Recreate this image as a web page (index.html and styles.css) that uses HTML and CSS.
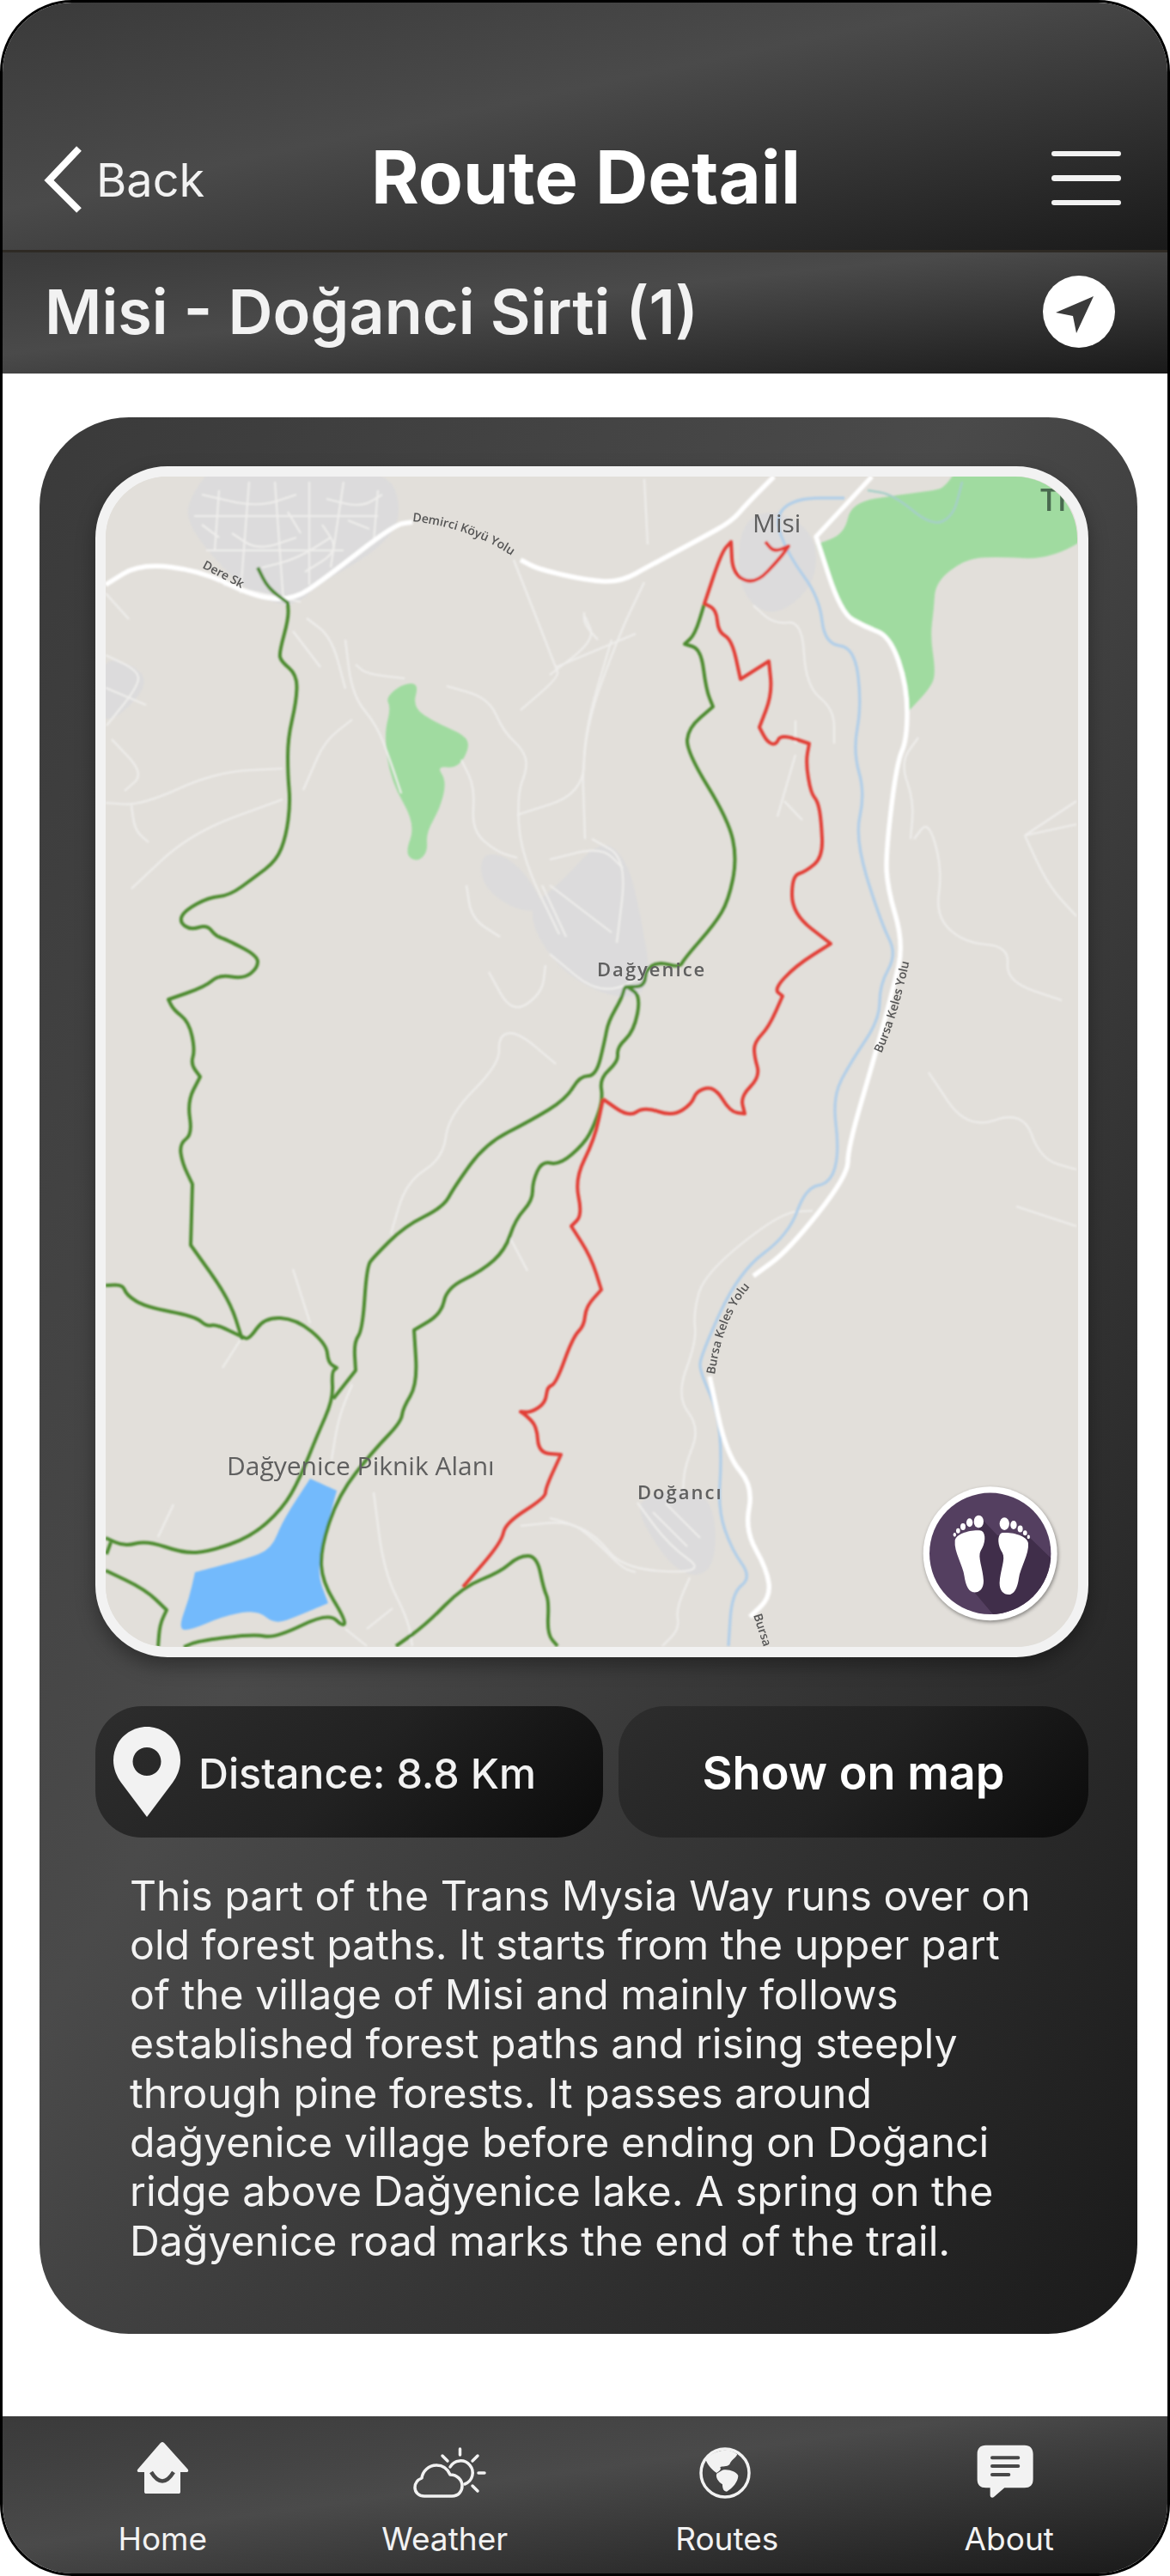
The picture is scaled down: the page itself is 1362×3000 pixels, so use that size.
FILE: index.html
```html
<!DOCTYPE html>
<html lang="en">
<head>
<meta charset="utf-8">
<title>Route Detail</title>
<link rel="stylesheet" href="styles.css">
</head>
<body>
<div class="phone">
  <header class="topbar">
    <a class="back">
      <svg class="back-icon" viewBox="0 0 50 80"><path d="M42 4 L7 41 L42 76"/></svg>
      <span>Back</span>
    </a>
    <h1 class="title">Route Detail</h1>
    <div class="menu"><i></i><i></i><i></i></div>
  </header>
  <div class="subbar">
    <h2 class="route-name">Misi - Doğanci Sirti (1)</h2>
    <svg class="locate" viewBox="0 0 84 84"><circle cx="42" cy="42" r="42" class="white"/><path class="dark" d="M59 24 L15 43 L35 47 L39 67 Z"/></svg>
  </div>
  <main class="content">
    <section class="card">
      <div class="map-frame">
        <svg class="map" viewBox="123 554 1131 1363">
          <defs>
            <filter id="soft" x="-2%" y="-2%" width="104%" height="104%"><feGaussianBlur stdDeviation="1"/></filter>
            <filter id="softer" x="-2%" y="-2%" width="104%" height="104%"><feGaussianBlur stdDeviation="0.5"/></filter>
            <path id="lbl1" d="M480 606 C520 610 570 625 606 654"/>
            <path id="lbl2" d="M235 660 L288 688"/>
            <path id="lbl3" d="M1026 1226 C1042 1190 1052 1150 1062 1104"/>
            <path id="lbl4" d="M832 1600 C838 1560 850 1520 880 1490"/>
            <path id="lbl5" d="M877 1880 L890 1920"/>
          </defs>
          <rect x="123" y="554" width="1131" height="1363" class="land"/>
          <g filter="url(#soft)">
            <g class="smooth">
              <path class="village" d="M226 570 L250 540 L450 540 L470 600 L440 640 L370 680 L340 708 L290 690 L240 640 L215 600 Z"/>
              <path class="village" d="M115 760 L170 780 L165 810 L115 850 Z"/>
              <path class="village" d="M650 1030 L700 975 L730 1000 L745 1060 L760 1150 L720 1165 L650 1130 L610 1060 Z"/>
              <path class="village" d="M560 990 L600 1000 L640 1060 L600 1060 L560 1030 Z"/>
              <path class="village" d="M860 610 L900 590 L950 620 L950 680 L900 720 L860 690 Z"/>
              <path class="village" d="M745 1740 L830 1730 L835 1830 L790 1835 L745 1770 Z"/>
              <path class="forest" d="M1100 566 L1118 540 L1300 540 L1300 600 L1228 651 L1154 647 L1122 651 L1089 677 L1087 709 L1083 740 L1089 780 L1085 798 L1056 829 L1056 829 L1056 798 L1038 740 L1007 729 L979 717 L950 633 L950 633 L983 621 L991 584 L1048 575 L1089 570 Z"/>
              <path class="forest" d="M467 796 L488 794 L480 823 L508 841 L541 855 L547 869 L533 894 L508 891 L520 909 L512 941 L496 969 L498 991 L486 1003 L471 994 L484 959 L455 909 L447 855 L455 823 L449 812 Z"/>
              <path class="water" d="M361 1721 L361 1721 L392 1735 L392 1735 L378 1787 L369 1831 L382 1866 L382 1866 L349 1880 L320 1891 L300 1874 L263 1880 L218 1899 L208 1894 L220 1861 L227 1830 L227 1830 L288 1814 L316 1803 L329 1770 Z"/>
            </g>
            <g class="road-thin smooth">
              <path d="M598 651 L647 776 L651 787 L606 826"/>
              <path d="M647 776 L740 737"/>
              <path d="M414 773 L427 784 L471 789"/>
              <path d="M402 744 L410 809 L439 844 L455 887 L467 923"/>
              <path d="M357 719 L386 741 L402 801"/>
              <path d="M341 734 L373 776"/>
              <path d="M410 837 L378 862 L361 901 L353 919"/>
              <path d="M123 934 L165 937 L251 898 L329 894"/>
              <path d="M153 937 L157 966 L173 980"/>
              <path d="M329 930 L222 969 L153 1034"/>
              <path d="M520 798 L569 812 L586 851 L610 873 L614 894 L602 923 L606 994 L651 1087"/>
              <path d="M680 712 L680 726 L696 744"/>
              <path d="M712 744 L680 851 L680 923 L602 948"/>
              <path d="M537 884 L553 916 L549 966 L578 991 L602 998"/>
              <path d="M543 1030 L549 1069 L582 1090"/>
              <path d="M631 1030 L659 1090"/>
              <path d="M640 1030 L712 1085"/>
              <path d="M123 762 L161 780 L161 798 L124 844"/>
              <path d="M255 570 L250 640 M290 560 L280 690 M320 560 L330 700 M226 600 L440 600 M240 640 L400 640 M360 560 L360 680 M400 560 L385 660 M440 570 L435 630 M260 680 L350 700"/>
              <path d="M235 575 L300 590 L345 575 M270 620 L300 640 L345 625 M305 660 L345 650 L385 625 M380 580 L420 590 L445 575 M235 610 L255 625 M405 605 L430 615 M335 595 L350 620 M375 610 L395 640 L355 665"/>
              <path d="M123 690 L150 720 M123 800 L170 820 M130 860 L168 900 L145 920"/>
              <path d="M1193 972 L1253 932 M1193 972 L1253 959 M1193 972 L1220 1030 L1253 1066"/>
              <path d="M1064 976 L1081 954 L1097 1012 L1089 1066 L1122 1097 L1175 1101 L1171 1142 L1236 1164"/>
              <path d="M1069 858 L1048 887 L1064 932 L1060 976"/>
              <path d="M877 704 L901 726 L934 722 L938 798 L971 825 L971 865"/>
              <path d="M926 838 L926 865 M926 878 L905 950 M913 932 L934 954"/>
              <path d="M681 717 L693 744 L640 785"/>
              <path d="M750 677 L718 744 L677 860 L681 976"/>
              <path d="M750 557 L754 633 M640 1000 L700 985 L725 1010"/>
              <path d="M689 976 L730 999 L718 1097"/>
              <path d="M640 1110 L700 1160 L760 1130"/>
              <path d="M1183 1404 L1253 1427"/>
              <path d="M1081 1248 L1126 1315 L1191 1292 L1211 1349 L1253 1361"/>
              <path d="M946 1409 L909 1411 L820 1482 L807 1528 L811 1561 L787 1625 L815 1662 L797 1707 L795 1735"/>
              <path d="M742 1749 L779 1799 L824 1831 L726 1827 L693 1786 L660 1772 L640 1767"/>
              <path d="M803 1836 L787 1873 L791 1896 L771 1916 M760 1760 L800 1800 M775 1750 L815 1790"/>
              <path d="M341 1477 L361 1540 M280 1559 L259 1592 M202 1751 L184 1789"/>
              <path d="M435 1737 L447 1830 L475 1885 L480 1916 M402 1896 L427 1916 M457 1872 L427 1896"/>
              <path d="M569 1131 L596 1180 L631 1156 L635 1123"/>
              <path d="M455 1436 L473 1375 L516 1348 L522 1298 L582 1238 L580 1205 L602 1200 L647 1238"/>
              <path d="M594 1441 L614 1479 M386 1699 L394 1650 L410 1611"/>
              <path d="M606 1776 L663 1770 L692 1792 L724 1825 L740 1830"/>
            </g>
            <g class="smooth">
              <path class="river" d="M983 579 L926 579 L901 601 L918 646 L954 695 L960 749 L995 753 L1003 820 L993 874 L1007 923 L995 976 L1026 1075 L1044 1110 L1024 1146 L1024 1186 L991 1235 L969 1276 L977 1340 L967 1377 L938 1382 L918 1437 L860 1480 L815 1579 L815 1597 L836 1643 L840 1698 L836 1758 L852 1804 L875 1836 L852 1854 L848 1916"/>
              <path class="river thin" d="M1010 570 L1040 575 L1085 612 L1110 600 L1120 560"/>
            </g>
            <g class="road-main smooth">
              <path d="M123 680 L163 655 L235 664 L296 694 L341 698 L378 673 L459 610 L480 607 M606 651 L627 662 L684 675 L722 677 L758 657 L816 626 L852 606 L869 586 L901 554"/>
              <path d="M1015 554 L950 624 L950 624 L979 713 L1007 729 L1036 740 L1056 798 L1056 860 L1044 887 L1032 985 L1032 1030 L1052 1097 L1040 1150 L1018 1230 L987 1336 L987 1368 L918 1455 L877 1485"/>
              <path d="M826 1602 L846 1694 L877 1730 L867 1781 L893 1827 L897 1859 L873 1882"/>
            </g>
            <g class="trail-green smooth">
              <path d="M300 660 L312 684 L335 701 L335 701 L336 719 L325 759 L327 769 L346 785 L345 816 L335 859 L335 901 L338 934 L333 973 L322 1001 L296 1021 L267 1042 L243 1044 L214 1060 L209 1073 L222 1082 L241 1076 L251 1089 L263 1093 L300 1112 L300 1126 L284 1139 L255 1134 L239 1148 L196 1163 L196 1163 L202 1175 L220 1189 L227 1222 L222 1238 L233 1253 L233 1253 L218 1282 L224 1320 L209 1331 L212 1353 L224 1378 L224 1378 L222 1449 L222 1449 L267 1512 L282 1559"/>
              <path d="M123 1496 L143 1495 L147 1507 L169 1521 L227 1532 L241 1544 L251 1541 L282 1556 L290 1559 L308 1533 L345 1535 L380 1564 L382 1586 L392 1592 L392 1592 L386 1597 L388 1628 L369 1671 L349 1721 L329 1756 L292 1789 L243 1806 L214 1808 L171 1793 L145 1800 L123 1790"/>
              <path d="M124 1809 L129 1795"/>
              <path d="M388 1628 L414 1595 L414 1595 L412 1562 L422 1548 L427 1474 L435 1463 L471 1427 L516 1405 L529 1381 L565 1331 L618 1304 L659 1279 L675 1252 L694 1252 L704 1211 L708 1189 L724 1161 L727 1149 L730 1148 L750 1148 L752 1128 L767 1119 L791 1126 L797 1115 L832 1075 L848 1048 L858 999 L848 954 L799 874 L801 847 L830 822 L830 822 L822 802 L816 755 L797 749 L797 749 L809 738 L820 702"/>
              <path d="M730 1148 L746 1159 L738 1200 L718 1219 L720 1235 L698 1255 L702 1279 L692 1309 L680 1331 L651 1356 L631 1351 L620 1375 L620 1397 L600 1419 L588 1455 L561 1479 L520 1499 L514 1529 L482 1548 L482 1548 L486 1611 L469 1639 L467 1655 L435 1688 L394 1740 L373 1803 L375 1841 L402 1885 L400 1894 L382 1877 L320 1907 L296 1902 L231 1910 L214 1917"/>
              <path d="M123 1828 L169 1850 L194 1874 L194 1874 L186 1891 L184 1917"/>
              <path d="M461 1916 L496 1891 L539 1847 L582 1830 L604 1811 L625 1811 L633 1850 L639 1863 L637 1902 L649 1916"/>
            </g>
            <g class="trail-red smooth">
              <path d="M539 1847 L584 1795 L588 1773 L635 1743 L635 1732 L653 1693 L653 1693 L627 1691 L625 1660 L612 1647 L606 1643 L606 1643 L618 1644 L635 1633 L637 1614 L647 1611 L667 1556 L680 1543 L682 1521 L700 1501 L700 1501 L688 1463 L665 1427 L665 1427 L678 1414 L669 1372 L692 1326 L702 1279"/>
              <path d="M702 1279 L732 1300 L750 1288 L783 1299 L805 1285 L811 1269 L832 1264 L850 1294 L867 1296 L867 1296 L862 1276 L885 1253 L878 1229 L878 1213 L895 1195 L911 1159 L911 1159 L901 1151 L926 1124 L967 1098 L967 1098 L922 1063 L922 1019 L938 1014 L958 997 L956 954 L952 932 L944 923 L938 887 L942 865 L942 865 L909 854 L903 867 L893 863 L884 846 L884 846 L899 807 L895 769 L895 769 L862 790 L862 790 L852 744 L836 735 L834 709 L820 702 L820 702 L840 642 L851 630 L851 630 L853 668 L879 680 L909 648 L918 635 L918 635 L901 642 L891 630"/>
            </g>
          </g>
          <g class="labels" filter="url(#softer)">
            <text class="l-sm"><textPath href="#lbl1">Demirci Köyü Yolu</textPath></text>
            <text class="l-sm"><textPath href="#lbl2">Dere Sk</textPath></text>
            <text class="l-sm"><textPath href="#lbl3">Bursa Keles Yolu</textPath></text>
            <text class="l-sm"><textPath href="#lbl4">Bursa Keles Yolu</textPath></text>
            <text class="l-sm"><textPath href="#lbl5">Bursa</textPath></text>
            <text class="l-town" x="876" y="619">Misi</text>
            <text class="l-vil" x="695" y="1136">Dağyenice</text>
            <text class="l-vil" x="742" y="1745">Doğancı</text>
            <text class="l-park" x="264" y="1717">Dağyenice Piknik Alanı</text>
            <text class="l-green" x="1211" y="594">Tr</text>
          </g>
        </svg>
        <svg class="badge" viewBox="0 0 170 170">
          <defs><clipPath id="disc"><circle cx="81.7" cy="83.3" r="70.7"/></clipPath></defs>
          <circle cx="81.7" cy="83.3" r="78" class="white"/>
          <circle cx="81.7" cy="83.3" r="70.7" class="plum"/>
          <path class="plum-dark" clip-path="url(#disc)" d="M72 43 L90 62 L125 62 L157 93 V167 L90 160 L52 115 Z"/>
          <g transform="scale(.3333)" class="white">
            <path d="M122 205 C125 180 180 165 215 170 C232 180 228 215 212 240 C200 262 220 300 222 345 C222 375 205 388 185 385 C165 380 158 350 155 330 C150 290 118 245 122 205 Z"/>
            <ellipse cx="205" cy="138" rx="17" ry="22"/><ellipse cx="173" cy="142" rx="11" ry="15"/><ellipse cx="150" cy="156" rx="9" ry="12"/><ellipse cx="133" cy="170" rx="7" ry="9"/><ellipse cx="121" cy="184" rx="5" ry="7"/>
          </g>
          <g transform="translate(166.6 2.6) scale(-.3333 .3333)" class="white">
            <path d="M122 205 C125 180 180 165 215 170 C232 180 228 215 212 240 C200 262 220 300 222 345 C222 375 205 388 185 385 C165 380 158 350 155 330 C150 290 118 245 122 205 Z"/>
            <ellipse cx="205" cy="138" rx="17" ry="22"/><ellipse cx="173" cy="142" rx="11" ry="15"/><ellipse cx="150" cy="156" rx="9" ry="12"/><ellipse cx="133" cy="170" rx="7" ry="9"/><ellipse cx="121" cy="184" rx="5" ry="7"/>
          </g>
        </svg>
      </div>
      <div class="actions">
        <div class="pill distance">
          <svg class="pin" viewBox="132 2010 78 105"><path fill-rule="evenodd" d="M171 2010 C192 2010 210 2027 210 2049 C210 2059 206 2068 201 2075 L171 2115 L141 2075 C136 2068 132 2059 132 2049 C132 2027 150 2010 171 2010 Z M171 2034 A16.5 16.5 0 1 0 171 2067 A16.5 16.5 0 1 0 171 2034 Z"/></svg>
          <span>Distance: 8.8 Km</span>
        </div>
        <button class="pill show">Show on map</button>
      </div>
      <p class="desc">This part of the Trans Mysia Way runs over on old forest paths. It starts from the upper part of the village of Misi and mainly follows established forest paths and rising steeply through pine forests. It passes around dağyenice village before ending on Doğanci ridge above Dağyenice lake. A spring on the Dağyenice road marks the end of the trail.</p>
    </section>
  </main>
  <nav class="tabs">
    <a class="tab">
      <svg class="tab-icon" viewBox="138 2842 100 70">
        <path class="ico" d="M188 2844 C189.5 2844 190 2845 191 2846 L217 2875 C219 2877 218.5 2879 216 2879 L209 2879 V2902 C209 2903.5 208 2904 207 2904 H169 C168 2904 167 2903.5 167 2902 V2879 L161 2879 C158.5 2879 158 2877 160 2875 L185 2846 C186 2845 186.5 2844 188 2844 Z"/>
        <path class="ico-cut" d="M175 2879 Q188 2900 201 2879"/>
      </svg>
      <span>Home</span>
    </a>
    <a class="tab">
      <svg class="tab-icon" viewBox="467 2842 100 70">
        <g class="ico-line">
          <path d="M493 2907 H525 C533 2907 537 2901 537 2895 C537 2888 531 2882 523 2882 C520 2875 514 2871 507 2871 C498 2871 491 2878 490 2886 C485 2888 482 2892 482 2897 C482 2903 487 2907 493 2907 Z"/>
          <path d="M523 2873 A14 14 0 1 1 540 2893"/>
          <path d="M534.5 2852 V2859 M514 2860 L520 2866 M555 2860 L549 2866 M556 2880 H563 M549 2895 L555 2901"/>
        </g>
      </svg>
      <span>Weather</span>
    </a>
    <a class="tab">
      <svg class="tab-icon" viewBox="795 2842 100 70">
        <circle class="ico-ring" cx="843" cy="2880" r="28"/>
        <g transform="translate(780 2830) scale(.3333)" class="ico">
          <path d="M122 105 C140 75 200 55 232 85 C225 100 210 105 205 120 C195 130 180 125 172 130 C178 140 165 145 160 150 C145 140 130 125 122 105 Z"/>
          <path d="M180 140 C200 135 230 145 235 160 C235 180 215 205 195 215 C180 215 180 195 180 190 C165 180 155 165 160 152 Z"/>
        </g>
      </svg>
      <span>Routes</span>
    </a>
    <a class="tab">
      <svg class="tab-icon" viewBox="1124 2842 100 70">
        <g transform="translate(780 2830) scale(.3333)">
          <path class="ico" d="M1100 53 H1235 C1255 53 1265 65 1265 83 V172 C1265 192 1255 202 1235 202 H1165 L1127 235 C1120 238 1115 234 1115 228 V202 H1100 C1080 202 1070 192 1070 172 V83 C1070 65 1080 53 1100 53 Z"/>
          <path class="ico-lines" d="M1122 97 H1213 M1122 126 H1213 M1122 156 H1180"/>
        </g>
      </svg>
      <span>About</span>
    </a>
  </nav>
</div>
<script src="smooth.js"></script>
</body>
</html>
```

FILE: styles.css
```css
* { box-sizing: border-box; }
html, body { margin: 0; padding: 0; background: #fff; }
body { font-family: Inter, "Liberation Sans", sans-serif; }
.phone {
  width: 1362px; height: 3000px;
  border: 3px solid #000; border-radius: 84px;
  overflow: hidden; display: flex; flex-direction: column; background: #fff;
}
.topbar, .subbar, .tabs, .card {
  background: linear-gradient(to bottom right, #3a3a3a 0%, #4a4a4a 42%, #1a1a1a 100%);
}
.topbar {
  height: 288px; flex: none; padding: 0 54px 38px 56px;
  display: grid; grid-template-columns: 1fr auto 1fr; align-items: end;
}
.back { display: flex; align-items: center; gap: 12px; color: #f2f2f2; font-size: 54px; height: 92px; padding-top: 4px; margin-left: -9px; }
.back-icon { width: 50px; height: 80px; fill: none; stroke: #fff; stroke-width: 8; }
.title { margin: 0; font-size: 85px; font-weight: 700; color: #fff; line-height: 92px; }
.menu { justify-self: end; display: flex; flex-direction: column; gap: 22px; padding-bottom: 14px; }
.menu i { display: block; width: 81px; height: 6.5px; border-radius: 4px; background: #f2f2f2; }
.subbar {
  height: 144px; flex: none; border-top: 3px solid #2e2a24;
  display: flex; align-items: center; justify-content: space-between;
  padding: 0 61px 4px 49px;
}
.route-name { margin: 0; font-size: 72px; font-weight: 600; color: #f2f2f2; }
.locate { width: 84px; height: 84px; }
.white { fill: #fff; }
.dark { fill: #3a3a3a; }
.content { flex: 1; padding: 51px 0 0 43px; }
.card {
  width: 1278px; border-radius: 104px;
  padding: 57px 57px 80px 65px;
}
.map-frame {
  position: relative; border: 12px solid #f2f2f2; border-radius: 84px;
  background: #e2dfda; box-shadow: 0 10px 22px rgba(0,0,0,.35);
}
.map { display: block; width: 1131px; height: 1363px; border-radius: 72px; }
.land { fill: #e2dfda; }
.village { fill: #dcdbdc; }
.forest { fill: #a0dba0; }
.water { fill: #73bafc; }
.road-thin path { fill: none; stroke: #efeeec; stroke-width: 2.2; stroke-linejoin: round; }
.road-main path { fill: none; stroke: #fff; stroke-width: 5.5; stroke-linejoin: round; }
.river { fill: none; stroke: #b3cfe8; stroke-width: 3.5; stroke-linejoin: round; }
.river.thin { stroke-width: 2.5; stroke: #a6cfc8; }
.trail-green path { fill: none; stroke: #4c8a2e; stroke-width: 4; stroke-linejoin: round; }
.trail-red path { fill: none; stroke: #e23c36; stroke-width: 4; stroke-linejoin: round; }
.labels text { font-family: "Open Sans", sans-serif; fill: #5e5e5e; }
.labels .l-sm { font-size: 14px; fill: #555; font-weight: 600; }
.labels .l-town { font-size: 30px; }
.labels .l-vil { font-size: 22px; letter-spacing: 2px; font-weight: 600; }
.labels .l-park { font-size: 30px; }
.labels .l-green { font-size: 36px; fill: #4a6a50; font-weight: 600; }
.badge {
  position: absolute; right: 14px; bottom: 22px; width: 170px; height: 170px;
  filter: drop-shadow(1px 2px 2px rgba(0,0,0,.4));
}
.plum { fill: #543f60; }
.plum-dark { fill: #402e4a; }
.actions { display: grid; grid-template-columns: 591px 1fr; gap: 18px; margin-top: 57px; }
.pill {
  height: 153px; border: 0; border-radius: 54px; color: #fff;
  background: linear-gradient(135deg, #2d2d2d 0%, #222 50%, #0b0b0b 100%);
  display: flex; align-items: center; font-family: inherit;
}
.distance { padding-left: 21px; gap: 21px; font-size: 48.4px; font-weight: 500; color: #f2f2f2; }
.distance span { padding-top: 3px; }
.pin { width: 78px; height: 105px; fill: #f2f2f2; }
.show { justify-content: center; font-size: 54px; font-weight: 600; padding-top: 3px; }
.desc { margin: 39px 0 0 40px; font-size: 48.2px; line-height: 57.4px; color: #f2f2f2; width: 1062px; }
.tabs { flex: none; height: 183px; display: grid; grid-template-columns: repeat(4, 328.5px); padding: 28px 0 0 22px; }
.tab { display: flex; flex-direction: column; align-items: center; color: #f2f2f2; font-size: 37px; line-height: 44px; gap: 23px; }
.tab-icon { width: 100px; height: 70px; display: block; }
.ico { fill: #f2f2f2; }
.ico-cut { fill: none; stroke: #484848; stroke-width: 4.5; }
.ico-line path { fill: none; stroke: #f2f2f2; stroke-width: 3.5; stroke-linecap: round; stroke-linejoin: round; }
.ico-ring { fill: none; stroke: #f2f2f2; stroke-width: 3.5; }
.ico-lines { fill: none; stroke: #484848; stroke-width: 12; stroke-linecap: round; }
```

FILE: smooth.js
```js
// Rounds the hand-traced map polylines into curves through their segment midpoints.
document.querySelectorAll('.smooth path').forEach(function (path) {
  var source = path.getAttribute('d');
  var closed = /Z/i.test(source);
  var out = source.split(/(?=M)/).map(function (part) {
    var n = part.match(/-?[\d.]+/g).map(Number), p = [];
    for (var i = 0; i < n.length; i += 2) p.push([n[i], n[i + 1]]);
    var mid = function (a, b) { return ((a[0] + b[0]) / 2) + ' ' + ((a[1] + b[1]) / 2); };
    var d;
    if (closed) {
      d = 'M' + mid(p[p.length - 1], p[0]);
      p.forEach(function (q, j) { d += ' Q' + q[0] + ' ' + q[1] + ' ' + mid(q, p[(j + 1) % p.length]); });
      return d + ' Z';
    }
    d = 'M' + p[0].join(' ') + ' L' + mid(p[0], p[1]);
    for (var j = 1; j < p.length - 1; j++) d += ' Q' + p[j].join(' ') + ' ' + mid(p[j], p[j + 1]);
    return d + ' L' + p[p.length - 1].join(' ');
  });
  path.setAttribute('d', out.join(' '));
});
```
